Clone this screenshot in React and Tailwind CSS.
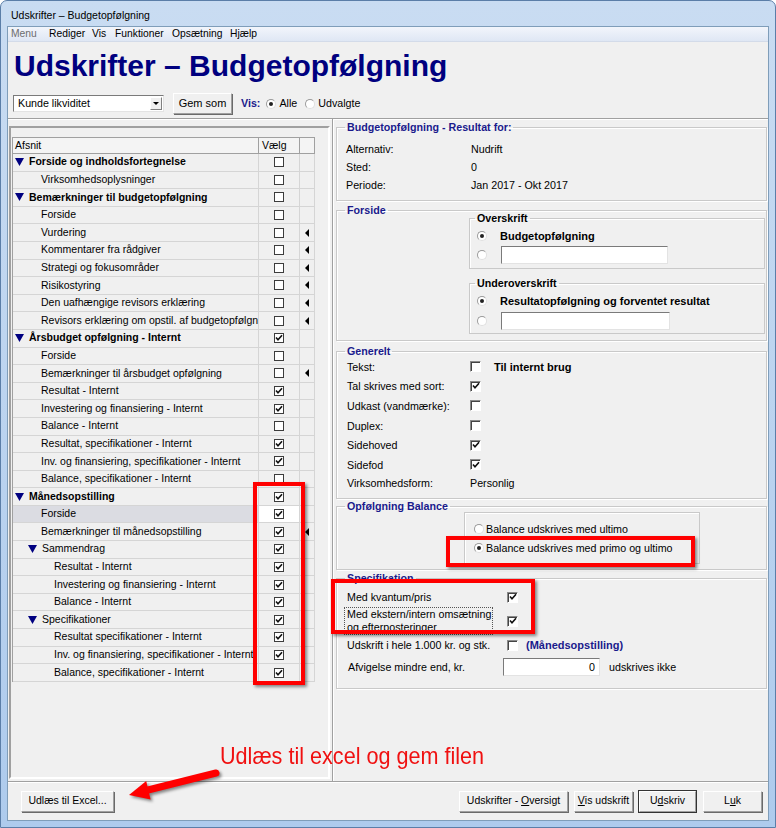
import React from 'react';

const rows = [
  { t: 'Forside og indholdsfortegnelse', l: 0, g: true },
  { t: 'Virksomhedsoplysninger', l: 1 },
  { t: 'Bemærkninger til budgetopfølgning', l: 0, g: true },
  { t: 'Forside', l: 1 },
  { t: 'Vurdering', l: 1, a: true },
  { t: 'Kommentarer fra rådgiver', l: 1, a: true },
  { t: 'Strategi og fokusområder', l: 1, a: true },
  { t: 'Risikostyring', l: 1, a: true },
  { t: 'Den uafhængige revisors erklæring', l: 1, a: true },
  { t: 'Revisors erklæring om opstil. af budgetopfølgning', l: 1, a: true },
  { t: 'Årsbudget opfølgning - Internt', l: 0, g: true, c: true },
  { t: 'Forside', l: 1 },
  { t: 'Bemærkninger til årsbudget opfølgning', l: 1, a: true },
  { t: 'Resultat - Internt', l: 1, c: true },
  { t: 'Investering og finansiering - Internt', l: 1, c: true },
  { t: 'Balance - Internt', l: 1 },
  { t: 'Resultat, specifikationer - Internt', l: 1, c: true },
  { t: 'Inv. og finansiering, specifikationer - Internt', l: 1, c: true },
  { t: 'Balance, specifikationer - Internt', l: 1 },
  { t: 'Månedsopstilling', l: 0, g: true, c: true },
  { t: 'Forside', l: 1, c: true, sel: true },
  { t: 'Bemærkninger til månedsopstilling', l: 1, c: true, a: true },
  { t: 'Sammendrag', l: 1, g: true, c: true },
  { t: 'Resultat - Internt', l: 2, c: true },
  { t: 'Investering og finansiering - Internt', l: 2, c: true },
  { t: 'Balance - Internt', l: 2, c: true },
  { t: 'Specifikationer', l: 1, g: true, c: true },
  { t: 'Resultat specifikationer - Internt', l: 2, c: true },
  { t: 'Inv. og finansiering, specifikationer - Internt', l: 2, c: true },
  { t: 'Balance, specifikationer - Internt', l: 2, c: true },
];

const indent = ['pl-[2px]', 'pl-[15px]', 'pl-[28px]'];
const leafIndent = ['pl-[2px]', 'pl-[28px]', 'pl-[41px]'];

function Tick() {
  return (
    <svg width="8" height="8" viewBox="0 0 8 8" className="block">
      <path d="M1 3.5 L3 5.8 L7 1.2" fill="none" stroke="#111" strokeWidth="1.6" />
    </svg>
  );
}

function TreeBox({ checked }) {
  return (
    <div className="w-[10px] h-[10px] border border-[#3c3c3c] bg-white flex items-center justify-center">
      {checked && <Tick />}
    </div>
  );
}

function Check({ checked }) {
  return (
    <div className="w-[11px] h-[11px] border-t border-l border-t-[#8a8a8a] border-l-[#8a8a8a] border-b border-r border-b-white border-r-white bg-white shadow-[inset_1px_1px_0_#444] flex items-center justify-center">
      {checked && <Tick />}
    </div>
  );
}

function Radio({ on }) {
  return (
    <div className="w-[10px] h-[10px] rounded-full bg-white border border-[#9a9a9a] border-b-[#e0e0e0] border-r-[#e0e0e0] flex items-center justify-center">
      {on && <div className="w-[4px] h-[4px] rounded-full bg-[#222]" />}
    </div>
  );
}

function Triangle() {
  return (
    <svg width="9" height="8" viewBox="0 0 9 8" className="shrink-0">
      <polygon points="0,0 9,0 4.5,8" fill="#000080" />
    </svg>
  );
}

function LeftArrow() {
  return (
    <svg width="4" height="8" viewBox="0 0 4 8">
      <polygon points="4,0 4,8 0,4" fill="#000" />
    </svg>
  );
}

function Btn({ children, className = '', def }) {
  return (
    <div
      className={`h-[21px] flex items-center justify-center whitespace-pre bg-[#f0f0f0] border border-t-white border-l-white border-r-[#a0a0a0] border-b-[#a0a0a0] shadow-[1px_1px_0_#6a6a6a] ${def ? 'outline outline-1 outline-[#333]' : ''} ${className}`}
    >
      {children}
    </div>
  );
}

function Group({ title, className = '', children }) {
  return (
    <fieldset className={`border border-[#c9c9c9] shadow-[inset_1px_1px_0_#fff,1px_1px_0_#fff] ${className}`}>
      <legend className="ml-[8px] px-[2px] text-[#1a1a8c] font-bold leading-[12px]">{title}</legend>
      {children}
    </fieldset>
  );
}

function InnerGroup({ title, className = '', children }) {
  return (
    <fieldset className={`border border-[#c9c9c9] shadow-[inset_1px_1px_0_#fff] ${className}`}>
      <legend className="ml-[5px] px-[2px] font-bold leading-[12px] text-black">{title}</legend>
      {children}
    </fieldset>
  );
}

export default function App() {
  return (
    <div className="relative w-[776px] h-[828px] bg-gradient-to-b from-[#c9dcf2] to-[#aecbed] rounded-t-[7px] border border-[#5b7ea8] flex flex-col font-['Liberation_Sans',Arial,sans-serif] text-[10.7px] text-black overflow-hidden">
      {/* title bar */}
      <div className="h-[25px] shrink-0 flex items-center pl-[10px] pt-[4px] text-[10.5px]">Udskrifter – Budgetopfølgning</div>

      <div className="flex-1 mx-[6px] mb-[6px] bg-[#f0f0f0] border border-[#7f9db9] flex flex-col">
        {/* menu */}
        <div className="h-[15px] shrink-0 flex items-center pl-[3px] bg-gradient-to-b from-[#f2f5fb] to-[#dfe7f4] border-b border-[#d3dbe9] text-[10.3px]">
          <span className="w-[38px] text-[#6d6d6d]">Menu</span>
          <span className="w-[43px]">Rediger</span>
          <span className="w-[23px]">Vis</span>
          <span className="w-[57px]">Funktioner</span>
          <span className="w-[58px]">Opsætning</span>
          <span>Hjælp</span>
        </div>

        {/* heading */}
        <div className="h-[47px] shrink-0 pl-[6px] pt-[7px]">
          <div className="text-[30px] leading-[34px] font-bold text-[#00007f]">Udskrifter – Budgetopfølgning</div>
        </div>

        {/* toolbar */}
        <div className="h-[30px] shrink-0 flex items-center pl-[5px] border-b border-[#a0a0a0] shadow-[0_1px_0_#fff]">
          <div className="w-[151px] h-[17px] bg-white border border-t-[#7a7a7a] border-l-[#7a7a7a] border-b-[#e3e3e3] border-r-[#e3e3e3] flex items-center">
            <span className="flex-1 pl-[4px]">Kunde likviditet</span>
            <div className="w-[12px] h-[13px] mr-[1px] bg-[#f0f0f0] border border-t-white border-l-white border-r-[#808080] border-b-[#808080] flex items-center justify-center">
              <svg width="6" height="3" viewBox="0 0 6 3"><polygon points="0,0 6,0 3,3" fill="#000" /></svg>
            </div>
          </div>
          <Btn className="ml-[9px] w-[59px] text-[11px]">Gem som</Btn>
          <span className="ml-[9px] font-bold text-[#1a1a8c]">Vis:</span>
          <div className="ml-[6px]"><Radio on /></div>
          <span className="ml-[3px]">Alle</span>
          <div className="ml-[8px]"><Radio /></div>
          <span className="ml-[3px]">Udvalgte</span>
        </div>

        {/* main */}
        <div className="h-[662px] shrink-0 flex">
          {/* left panel */}
          <div className="w-[325px] shrink-0 flex flex-col pt-[7px] pl-[1px] pr-[2px] pb-[2px] border-r border-[#a0a0a0]">
            <div className="flex-1 border-2 border-t-[#a0a0a0] border-l-[#a0a0a0] border-b-white border-r-white pt-[9px] pl-[1px]">
              <div className="w-[303px] border-l border-[#a0a0a0] text-[10.5px]">
                <div className="grid grid-cols-[246px_41px_15px] h-[17px] border-t border-b border-[#a0a0a0] bg-[#f4f4f4]">
                  <div className="pl-[2px] flex items-center border-r border-[#a0a0a0]">Afsnit</div>
                  <div className="pl-[3px] flex items-center border-r border-[#a0a0a0]">Vælg</div>
                  <div className="border-r border-[#a0a0a0]" />
                </div>
                {rows.map((r, i) => (
                  <div key={i} className="grid grid-cols-[246px_41px_15px] h-[17.6px]">
                    <div
                      className={`flex items-center gap-[5px] overflow-hidden whitespace-nowrap border-b border-r border-[#d5d5d5] ${r.g ? indent[r.l] : leafIndent[r.l]} ${r.sel ? 'bg-[#dbdce2]' : ''} ${r.g && r.l === 0 ? 'font-bold' : ''}`}
                    >
                      {r.g && <Triangle />}
                      <span>{r.t}</span>
                    </div>
                    <div className={`flex items-center justify-center border-b border-r border-[#d5d5d5] ${r.sel ? 'bg-white' : ''}`}>
                      <TreeBox checked={r.c} />
                    </div>
                    <div className="flex items-center justify-center border-b border-r border-[#d5d5d5]">
                      {r.a && <LeftArrow />}
                    </div>
                  </div>
                ))}
              </div>
            </div>
          </div>

          {/* right panel */}
          <div className="flex-1 flex flex-col pl-[2px] pr-[1px] pt-[2px] border-l border-white">
            <Group title="Budgetopfølgning - Resultat for:" className="h-[80px]">
              <div className="pl-[9px] pt-[7px]">
                <div className="flex h-[18px] items-center"><span className="w-[125px]">Alternativ:</span><span>Nudrift</span></div>
                <div className="flex h-[18px] items-center"><span className="w-[125px]">Sted:</span><span>0</span></div>
                <div className="flex h-[19px] items-center"><span className="w-[125px]">Periode:</span><span>Jan 2017 - Okt 2017</span></div>
              </div>
            </Group>

            <Group title="Forside" className="h-[137px] mt-[3px]">
              <div className="pl-[132px] pr-[1px] -mt-[4px] flex flex-col gap-[8px]">
                <InnerGroup title="Overskrift" className="h-[57px]">
                  <div className="pl-[7px] pt-[3px]">
                    <div className="flex items-center h-[18px]"><Radio on /><span className="ml-[13px] font-bold text-[11px]">Budgetopfølgning</span></div>
                    <div className="flex items-center h-[20px]"><Radio /><div className="ml-[14px] w-[167px] h-[18px] bg-white border border-t-[#7a7a7a] border-l-[#7a7a7a] border-b-[#e3e3e3] border-r-[#e3e3e3]" /></div>
                  </div>
                </InnerGroup>
                <InnerGroup title="Underoverskrift" className="h-[57px]">
                  <div className="pl-[7px] pt-[3px]">
                    <div className="flex items-center h-[18px]"><Radio on /><span className="ml-[13px] font-bold text-[11px]">Resultatopfølgning og forventet resultat</span></div>
                    <div className="flex items-center h-[21px]"><Radio /><div className="ml-[14px] w-[169px] h-[18px] bg-white border border-t-[#7a7a7a] border-l-[#7a7a7a] border-b-[#e3e3e3] border-r-[#e3e3e3]" /></div>
                  </div>
                </InnerGroup>
              </div>
            </Group>

            <Group title="Generelt" className="h-[154px] mt-[4px]">
              <div className="pl-[10px]">
                {[
                  ['Tekst:', false, true],
                  ['Tal skrives med sort:', true],
                  ['Udkast (vandmærke):', false],
                  ['Duplex:', false],
                  ['Sidehoved', true],
                  ['Sidefod', true],
                ].map(([l, c, extra]) => (
                  <div key={l} className="flex items-center h-[19.6px]">
                    <span className="w-[123px]">{l}</span>
                    <Check checked={c} />
                    {extra && <span className="ml-[13px] font-bold text-[11px]">Til internt brug</span>}
                  </div>
                ))}
                <div className="flex items-center h-[17px]"><span className="w-[123px]">Virksomhedsform:</span><span>Personlig</span></div>
              </div>
            </Group>

            <Group title="Opfølgning Balance" className="h-[70px] mt-[1px]">
              <div className="pl-[127px]">
                <div className="w-[236px] h-[52px] border border-[#c9c9c9] shadow-[inset_1px_1px_0_#fff] pl-[9px] pt-[7px]">
                  <div className="flex items-center h-[18px]"><Radio /><span className="ml-[2px]">Balance udskrives med ultimo</span></div>
                  <div className="flex items-center h-[20px]"><Radio on /><span className="ml-[2px]">Balance udskrives med primo og ultimo</span></div>
                </div>
              </div>
            </Group>

            <Group title="Specifikation" className="h-[117px] mt-[2px]">
              <div className="pl-[7px] pt-[3px]">
                <div className="flex items-center h-[20px]"><span className="w-[163px] pl-[3px]">Med kvantum/pris</span><Check checked /></div>
                <div className="flex items-center h-[28px]">
                  <span className="w-[149px] leading-[13px] border border-dotted border-[#555] pl-[2px]">Med ekstern/intern omsætning og efterposteringer</span>
                  <span className="ml-[14px]"><Check checked /></span>
                </div>
                <div className="flex items-center h-[20px]"><span className="w-[163px] pl-[3px]">Udskrift i hele 1.000 kr. og stk.</span><Check /><span className="ml-[8px] font-bold text-[11px] text-[#1a1a8c]">(Månedsopstilling)</span></div>
                <div className="flex items-center h-[24px]">
                  <span className="w-[159px] pl-[4px]">Afvigelse mindre end, kr.</span>
                  <div className="w-[97px] h-[18px] bg-white border border-t-[#7a7a7a] border-l-[#7a7a7a] border-b-[#e3e3e3] border-r-[#e3e3e3] flex items-center justify-end pr-[4px]">0</div>
                  <span className="ml-[9px]">udskrives ikke</span>
                </div>
              </div>
            </Group>
          </div>
        </div>

        {/* footer */}
        <div className="flex-1 border-t border-[#a0a0a0] shadow-[inset_0_1px_0_#fff] flex items-center pl-[13px] pr-[6px] text-[10.5px]">
          <Btn className="w-[93px]">Udlæs til Excel...</Btn>
          <div className="flex-1" />
          <Btn className="w-[109px]">{'Udskrifter - '}<span className="underline">O</span>versigt</Btn>
          <Btn className="w-[59px] ml-[6px]"><span className="underline">V</span>is udskrift</Btn>
          <Btn className="w-[57px] ml-[6px]" def>U<span className="underline">d</span>skriv</Btn>
          <Btn className="w-[59px] ml-[7px]">L<span className="underline">u</span>k</Btn>
        </div>
      </div>

      {/* annotation overlays */}
      <div className="absolute left-[252px] top-[481px] w-[52px] h-[203px] border-[4px] border-[#f00] shadow-[2px_2px_3px_rgba(0,0,0,0.45)]" />
      <div className="absolute left-[445px] top-[535px] w-[249px] h-[31px] border-[4px] border-[#f00] shadow-[2px_2px_3px_rgba(0,0,0,0.45)]" />
      <div className="absolute left-[330px] top-[578px] w-[204px] h-[55px] border-[4px] border-[#f00] shadow-[2px_2px_3px_rgba(0,0,0,0.45)]" />
      <div className="absolute left-[219px] top-[740px] text-[24px] leading-[30px] text-[#f01010] scale-x-[0.9] origin-left whitespace-nowrap">Udlæs til excel og gem filen</div>
      <svg className="absolute left-[120px] top-[760px]" width="110" height="48" viewBox="0 0 110 48">
        <g style={{ filter: 'drop-shadow(2px 2px 1.5px rgba(0,0,0,0.45))' }}>
          <line x1="95" y1="12" x2="27" y2="29" stroke="#f00" strokeWidth="7" strokeLinecap="round" />
          <polygon points="8,34 29.6,38.5 25.2,20" fill="#f00" />
        </g>
      </svg>
    </div>
  );
}
